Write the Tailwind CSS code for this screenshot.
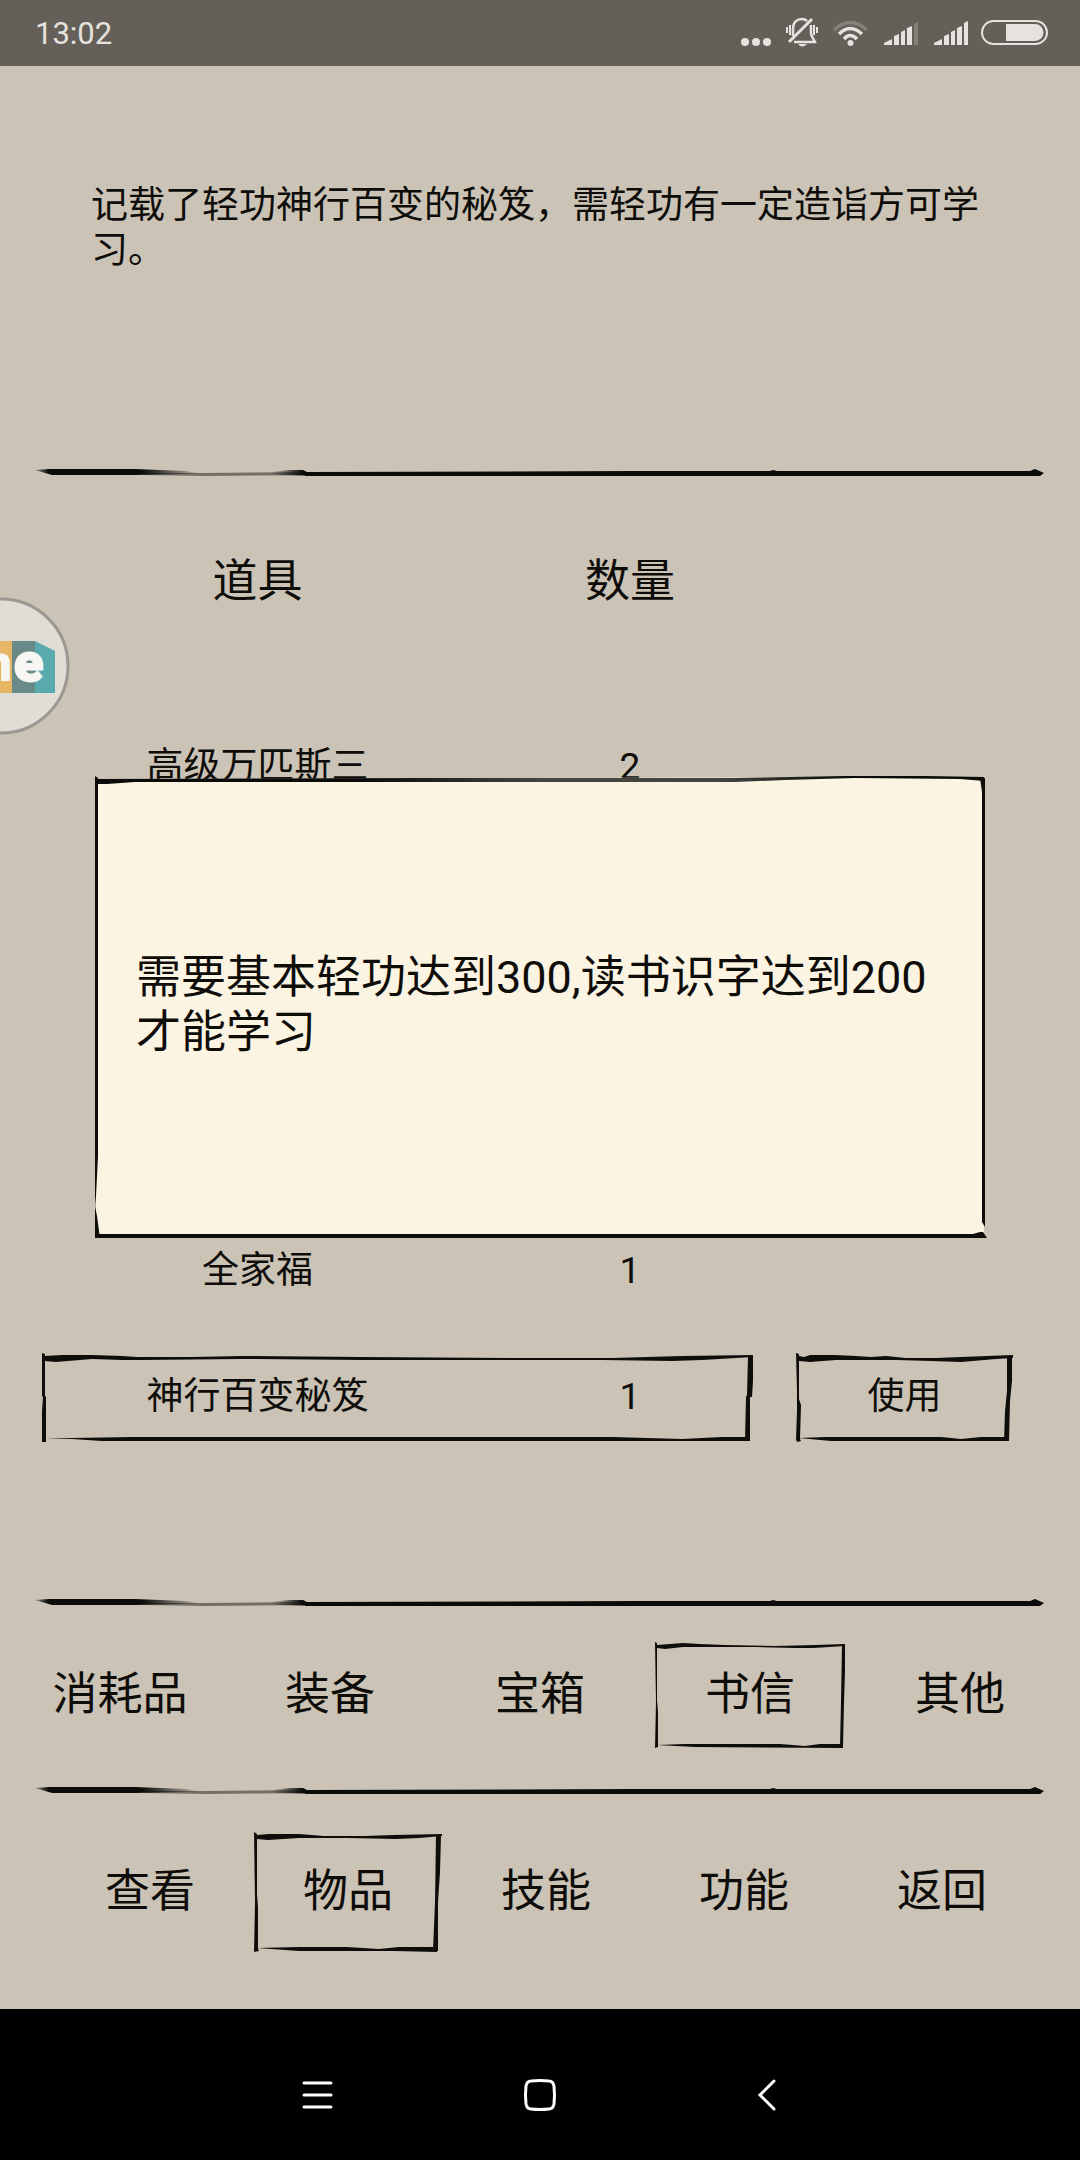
<!DOCTYPE html>
<html lang="zh-CN">
<head>
    <meta charset="UTF-8">
    <meta name="viewport" content="width=device-width, initial-scale=1.0">
    <title>物品</title>
    <script src="https://cdn.jsdelivr.net/npm/@tailwindcss/browser@4"></script>
</head>
<body class="flex min-h-screen flex-col bg-[#cbc3b5] font-[Roboto,'Noto_Sans_CJK_SC',sans-serif] font-normal text-[#0e0d0a]">
    <!-- ink stroke used by every divider -->
    <svg class="absolute h-0 w-0" aria-hidden="true">
        <defs>
            <linearGradient id="fade" x1="0" x2="1">
                <stop offset="0" stop-color="#0b0b0a" stop-opacity=".3"/>
                <stop offset=".08" stop-color="#0b0b0a"/>
                <stop offset=".65" stop-color="#0b0b0a"/>
                <stop offset="1" stop-color="#0b0b0a" stop-opacity=".1"/>
            </linearGradient>
            <linearGradient id="fadeIn" x1="0" x2="1">
                <stop offset="0" stop-color="#0b0b0a" stop-opacity="0"/>
                <stop offset=".5" stop-color="#0b0b0a"/>
                <stop offset="1" stop-color="#0b0b0a"/>
            </linearGradient>
            <linearGradient id="box-top" x1="0" x2="1">
                <stop offset="0" stop-color="#0b0b0a"/>
                <stop offset=".3" stop-color="#0b0b0a"/>
                <stop offset=".5" stop-color="#454540"/>
                <stop offset=".7" stop-color="#454540"/>
                <stop offset=".84" stop-color="#0b0b0a"/>
                <stop offset="1" stop-color="#0b0b0a"/>
            </linearGradient>
        </defs>
        <symbol id="ink-line" viewBox="0 0 1010 20" preserveAspectRatio="none">
            <path d="M0 6 L14 5 L100 5 L150 7 L164 9 L150 10 L100 11 L17 11 Z" fill="url(#fade)"/>
            <path d="M110 9 L170 9 L280 8 L280 11 L170 12 L110 11 Z" fill="#0b0b0a" fill-opacity=".45"/>
            <path d="M235 8 L255 6 L268 6 L272 8 L300 8 L300 12 L240 11 Z" fill="url(#fadeIn)"/>
            <path d="M270 8 L600 7 L735 7 L738 6 L742 7 L955 7 L995 7 L1000 5 L1009 9 L1005 12 L730 12 L400 12 L270 12 Z" fill="#0b0b0a"/>
            <path d="M15 -1 L23 -2 L20 0 Z" fill="#0b0b0a" fill-opacity=".3"/>
        </symbol>
    </svg>

    <header class="flex h-[66px] items-center justify-between bg-[#646059] pr-[32px] pl-[35px] text-[#e6e3de]">
        <time class="text-[31px] leading-none">13:02</time>
        <svg class="h-[66px] w-[308px]" viewBox="740 0 308 66" fill="#e6e3de" aria-label="状态栏">
            <circle cx="745" cy="42" r="4"/><circle cx="756" cy="42" r="4"/><circle cx="767" cy="42" r="4"/>
            <g fill="none" stroke="#e6e3de" stroke-width="2">
                <path d="M793 36 V29 C793 22 797 19 802 19 C804 19 806 20 807 21 M811 25 L811 33 C811 37 814 39 815 42 H794" stroke-width="2.5"/>
                <path d="M789 42 L812 19" stroke-width="3"/>
                <path d="M790 25 V35 M787 27 V33 M814 25 V35 M817 27 V33"/>
            </g>
            <path d="M798 44 H807 Q802 49 798 44 Z"/>
            <g fill="none" stroke="#e6e3de" stroke-width="3.5">
                <path d="M834 30 Q850 15 867 30" stroke-opacity=".25"/>
                <path d="M839 34 Q850 23 862 34"/>
                <path d="M844 39 Q850 32 857 39"/>
            </g>
            <circle cx="850.5" cy="43" r="3"/>
            <path d="M884 45 V43 L892 39 V45 Z M894 36 L899 34 V45 H894 Z M901 32 L905 30 V45 H901 Z M907 28 L912 26 V45 H907 Z"/>
            <path d="M914 24 L918 22 V45 H914 Z" fill-opacity=".25"/>
            <path d="M934 45 V43 L942 39 V45 Z M944 36 L949 34 V45 H944 Z M951 32 L955 30 V45 H951 Z M957 28 L962 26 V45 H957 Z M964 23 L968 21 V45 H964 Z"/>
            <rect x="982" y="21" width="65" height="23" rx="11.5" fill="none" stroke="#e6e3de" stroke-width="2"/>
            <path d="M1006 24 H1035 A8.5 8.5 0 0 1 1035 41 H1006 Z"/>
        </svg>
    </header>

    <main class="relative flex flex-1 flex-col">
        <p class="min-h-[398px] px-[91px] pt-[117px] text-[37px] leading-[45px]">记载了轻功神行百变的秘笈，需轻功有一定造诣方可学习。</p>

        <div class="px-[35px]"><svg class="block h-[20px] w-full overflow-visible"><use href="#ink-line"/></svg></div>

        <div class="mb-[135px] pr-[58px] pl-[42px]">
            <table class="w-full table-fixed text-center text-[37px] leading-[45px]">
                <colgroup><col class="w-[44%]"><col class="w-[32%]"><col class="w-[24%]"></colgroup>
                <thead>
                    <tr class="text-[45px]">
                        <th class="h-[219px] pb-[25px] font-normal">道具</th>
                        <th class="h-[219px] pb-[25px] font-normal">数量</th>
                        <td></td>
                    </tr>
                </thead>
                <tbody>
                    <tr class="h-[126px]"><td>高级万匹斯三</td><td>2</td><td></td></tr>
                    <tr class="h-[378px]"><td></td><td></td><td></td></tr>
                    <tr class="h-[126px]"><td>全家福</td><td>1</td><td></td></tr>
                    <tr class="relative h-[126px]">
                        <td>
                            <span class="absolute inset-y-[18px] right-[269px] left-0">
                                <svg class="h-full w-full overflow-visible" viewBox="0 0 711 90" preserveAspectRatio="none" fill="#0e0d0a">
                                    <path d="M0 2 L3 3 L3 45 L4 46 L4 88 L4 91 L0 91 L0 60 L1 46 L0 45 Z"/>
                                    <path d="M3 5 L20 4 L50 4 L80 5 L95 6 L150 6 L200 5 L320 6 L480 7 L570 7 L640 5 L711 4 L711 6 L660 9 L630 10 L560 9 L480 9 L320 9 L200 8 L100 9 L80 9 L50 8 L14 11 L3 10 Z"/>
                                    <path d="M706 5 L711 5 L711 30 L710 46 L708 46 L708 90 L703 90 L704 46 L705 44 Z"/>
                                    <path d="M3 87 L30 87 L90 86 L570 86 L640 88 L660 87 L680 86 L707 86 L707 90 L580 90 L60 90 L30 88 Z"/>
                                </svg>
                            </span>
                            神行百变秘笈
                        </td>
                        <td>1</td>
                        <td>
                            <button type="button" class="relative h-[90px] w-[217px] align-middle">
                                <svg class="absolute inset-0 h-full w-full overflow-visible" viewBox="0 0 217 90" preserveAspectRatio="none" fill="#0e0d0a">
                                    <path d="M0 2 L3 3 L3 48 L5 54 L4 88 L5 90 L1 91 L0 88 L1 60 L1 40 Z"/>
                                    <path d="M3 5 L8 6 L14 4 L38 4 L60 5 L75 6 L90 5 L110 7 L140 7 L165 6 L217 4 L217 7 L200 8 L165 11 L135 10 L100 9 L75 9 L40 9 L14 11 L3 10 Z"/>
                                    <path d="M211 5 L216 5 L216 30 L214 50 L213 90 L208 90 L209 60 L211 40 Z"/>
                                    <path d="M3 87 L30 86 L145 86 L165 88 L185 86 L212 86 L212 90 L150 90 L35 90 Z"/>
                                </svg>
                                使用
                            </button>
                        </td>
                    </tr>
                </tbody>
            </table>
        </div>

        <div class="px-[35px]"><svg class="block h-[20px] w-full overflow-visible"><use href="#ink-line"/></svg></div>

        <nav class="grid grid-cols-5 justify-items-center px-[15px] pt-[28px] pb-[34px] text-[45px] leading-[54px]" aria-label="物品分类">
            <button type="button" class="h-[106px] w-[191px]">消耗品</button>
            <button type="button" class="h-[106px] w-[191px]">装备</button>
            <button type="button" class="h-[106px] w-[191px]">宝箱</button>
            <button type="button" class="relative h-[106px] w-[191px]" aria-current="true">
                <svg class="absolute inset-0 h-full w-full overflow-visible" viewBox="0 0 191 106" preserveAspectRatio="none" fill="#0e0d0a">
                    <path d="M0 0 L2 1 L2 58 L3 70 L3 105 L0 106 L1 60 Z"/>
                    <path d="M2 3 L28 1 L45 2 L70 3 L120 4 L160 3 L190 2 L190 4 L158 6 L140 6 L100 5 L50 5 L28 5 L10 7 L2 6 Z"/>
                    <path d="M187 2 L190 2 L190 30 L189 60 L188 105 L185 105 L186 60 Z"/>
                    <path d="M2 103 L30 102 L125 102 L150 104 L165 102 L188 102 L188 106 L40 105 Z"/>
                </svg>
                书信
            </button>
            <button type="button" class="h-[106px] w-[191px]">其他</button>
        </nav>

        <div class="px-[35px]"><svg class="block h-[20px] w-full overflow-visible"><use href="#ink-line"/></svg></div>

        <nav class="grid grid-cols-5 justify-items-center pt-[30px] pr-[39px] pb-[57px] pl-[51px] text-[45px] leading-[54px]" aria-label="主菜单">
            <button type="button" class="h-[120px] w-[188px]">查看</button>
            <button type="button" class="relative h-[120px] w-[188px]" aria-current="page">
                <svg class="absolute inset-0 h-full w-full overflow-visible" viewBox="0 0 188 120" preserveAspectRatio="none" fill="#0e0d0a">
                    <path d="M0 0 L3 2 L3 62 L4 75 L4 117 L5 119 L0 120 L1 70 Z"/>
                    <path d="M3 3 L15 2 L45 2 L70 4 L93 4 L110 4 L140 3 L188 2 L188 4 L165 6 L142 7 L93 6 L70 6 L45 6 L14 8 L3 7 Z"/>
                    <path d="M182 3 L187 3 L186 40 L184 70 L184 119 L179 119 L181 70 Z"/>
                    <path d="M3 116 L45 115 L93 115 L125 117 L145 115 L183 115 L183 120 L140 119 L45 119 Z"/>
                </svg>
                物品
            </button>
            <button type="button" class="h-[120px] w-[188px]">技能</button>
            <button type="button" class="h-[120px] w-[188px]">功能</button>
            <button type="button" class="h-[120px] w-[188px]">返回</button>
        </nav>

        <!-- message box over the list -->
        <div role="dialog" class="absolute inset-x-[95px] top-[710px] flex h-[463px] items-center px-[41px] pb-[6px] text-[45px] leading-[55px]">
            <svg class="absolute inset-0 h-full w-full overflow-visible" viewBox="0 0 890 463" preserveAspectRatio="none" fill="#0e0d0a">
                <path d="M1 3 L889 1 L889 461 L1 461 Z" fill="#fcf4e2"/>
                <path d="M0 0 L3 2 L3 380 L1 420 L0 430 L2 440 L4 455 L5 462 L0 462 L0 420 Z"/>
                <path d="M2 3 L330 2 L640 2 L750 0 L830 0 L889 1 L889 5 L865 3 L760 2 L690 4 L640 6 L330 6 L40 6 L12 8 L2 8 Z" fill="url(#box-top)"/>
                <path d="M885 2 L890 2 L890 451 L887 446 L887 16 Z"/>
                <path d="M2 458 L878 458 L885 456 L888 456 L892 462 L2 462 Z"/>
            </svg>
            <p class="relative">需要基本轻功达到300,读书识字达到200才能学习</p>
        </div>

        <!-- floating helper bubble, half off the left edge -->
        <button type="button" class="absolute top-[531px] left-0" aria-label="悬浮球">
            <svg class="block h-[138px] w-[70px]" viewBox="0 0 70 138">
                <circle cx="1" cy="69" r="67" fill="#e0dcd6" stroke="#9b9791" stroke-width="3"/>
                <path d="M0 44 H12 V96 H0 Z" fill="#e6b664"/>
                <path d="M12 44 H35 V96 H12 Z" fill="#6a8989"/>
                <path d="M35 44 L55 54 V96 H35 Z" fill="#59aaad"/>
                <text x="12" y="84" text-anchor="end" font-family="Roboto" font-weight="900" font-size="52" fill="#f8f6f2">n</text>
                <text x="14" y="84" font-family="Roboto" font-weight="900" font-size="54" fill="#f8f6f2" stroke="#f8f6f2" stroke-width="2">e</text>
            </svg>
        </button>
    </main>

    <footer class="flex h-[151px] items-center justify-center bg-black pt-[21px]">
        <div class="grid w-[666px] grid-cols-3 justify-items-center">
            <button type="button" aria-label="菜单">
                <svg class="block h-[34px] w-[34px]" viewBox="0 0 34 34" stroke="#fff" stroke-width="3" stroke-linecap="round"><path d="M3 5 H30 M3 17 H30 M3 29 H30"/></svg>
            </button>
            <button type="button" aria-label="主页">
                <svg class="block h-[34px] w-[34px]" viewBox="0 0 34 34" fill="none" stroke="#fff" stroke-width="3"><path d="M8 3 Q17 2 26 3 Q30 3 31 8 Q32 17 31 26 Q30 31 26 31 Q17 32 8 31 Q4 31 3 26 Q2 17 3 8 Q4 3 8 3 Z"/></svg>
            </button>
            <button type="button" aria-label="返回">
                <svg class="block h-[34px] w-[34px]" viewBox="0 0 34 34" fill="none" stroke="#fff" stroke-width="3" stroke-linecap="round"><path d="M29 3 L15 17 L29 31"/></svg>
            </button>
        </div>
    </footer>
</body>
</html>
